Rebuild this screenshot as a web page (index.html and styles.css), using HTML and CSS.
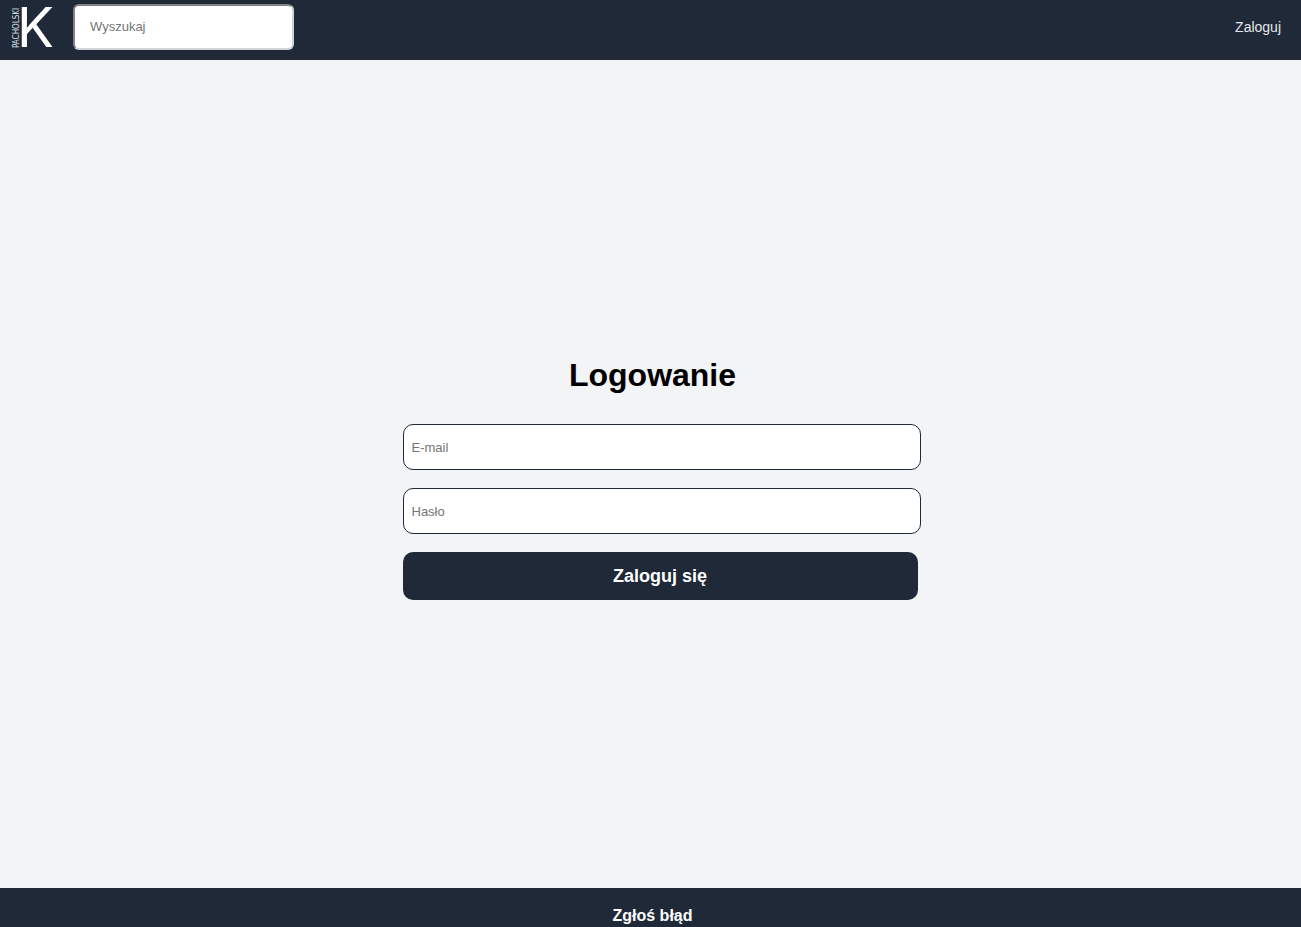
FILE: index.html
```html
<!DOCTYPE html>
<html lang="pl">
<head>
  <meta charset="utf-8">
  <meta name="viewport" content="width=device-width, initial-scale=1">
  <title>Logowanie</title>
  <link rel="stylesheet" href="styles.css">
</head>
<body>
  <header class="topbar">
    <a class="logo" href="#" aria-label="Pacholski K">
      <svg width="46" height="46" viewBox="0 0 46 46">
        <text class="logo-name" transform="translate(9 44) rotate(-90)">PACHOLSKI</text>
        <text class="logo-letter" x="7" y="43">K</text>
      </svg>
    </a>
    <input class="search" type="search" placeholder="Wyszukaj" aria-label="Wyszukaj">
    <a class="login-link" href="#">Zaloguj</a>
  </header>
  <main class="content">
    <form class="login-form">
      <h1 class="title">Logowanie</h1>
      <input class="field" type="email" placeholder="E-mail" aria-label="E-mail">
      <input class="field" type="password" placeholder="Hasło" aria-label="Hasło">
      <button class="submit" type="button">Zaloguj się</button>
    </form>
  </main>
  <footer class="footer">
    <a class="report-link" href="#">Zgłoś błąd</a>
  </footer>
</body>
</html>
```
FILE: styles.css
```css
body {
  margin: 0;
  min-height: 100vh;
  display: flex;
  flex-direction: column;
  background: #f3f4f6;
  font-family: "Liberation Sans", Arial, sans-serif;
}

.topbar {
  display: flex;
  align-items: center;
  box-sizing: border-box;
  height: 60px;
  padding: 0 20px 6px 10px;
  background: #1f2937;
}

.logo {
  display: flex;
  margin-right: 17px;
}

.logo svg {
  overflow: visible;
}

.logo-name {
  font-family: "DejaVu Sans Condensed", "DejaVu Sans", sans-serif;
  font-size: 8px;
  fill: #dfe1e4;
}

.logo-letter {
  font-family: Inter, sans-serif;
  font-size: 55px;
  line-height: 1;
  fill: #ffffff;
}

.search {
  appearance: none;
  box-sizing: border-box;
  width: 221px;
  height: 46px;
  padding: 0 15px 1px;
  border: 2px inset #d1d5db;
  border-radius: 6px;
  background: #ffffff;
  font-family: inherit;
  font-size: 13px;
}

.login-link {
  margin-left: auto;
  color: #e5e7eb;
  font-size: 14px;
  text-decoration: none;
}

.content {
  flex: 1;
  display: flex;
  align-items: center;
  justify-content: center;
  padding: 9px 0 0 4px;
}

.login-form {
  width: 500px;
}

.title {
  margin: 0 0 30px;
  font-size: 32px;
  line-height: 37px;
  text-align: center;
}

.field {
  display: block;
  box-sizing: content-box;
  width: 100%;
  height: 44px;
  margin: 0 0 18px;
  padding: 0 8px;
  border: 1px solid #1f2937;
  border-radius: 10px;
  background: #ffffff;
  font-family: inherit;
  font-size: 13px;
}

.submit {
  width: 103%;
  height: 48px;
  padding: 0;
  border: 0;
  border-radius: 10px;
  background: #1f2937;
  color: #ffffff;
  font-family: inherit;
  font-size: 18px;
  font-weight: bold;
}

.footer {
  padding: 19px 0 2px 4px;
  background: #1f2937;
  font-size: 16px;
  line-height: 18px;
  text-align: center;
}

.report-link {
  color: #ffffff;
  font-weight: bold;
  text-decoration: none;
}
```
